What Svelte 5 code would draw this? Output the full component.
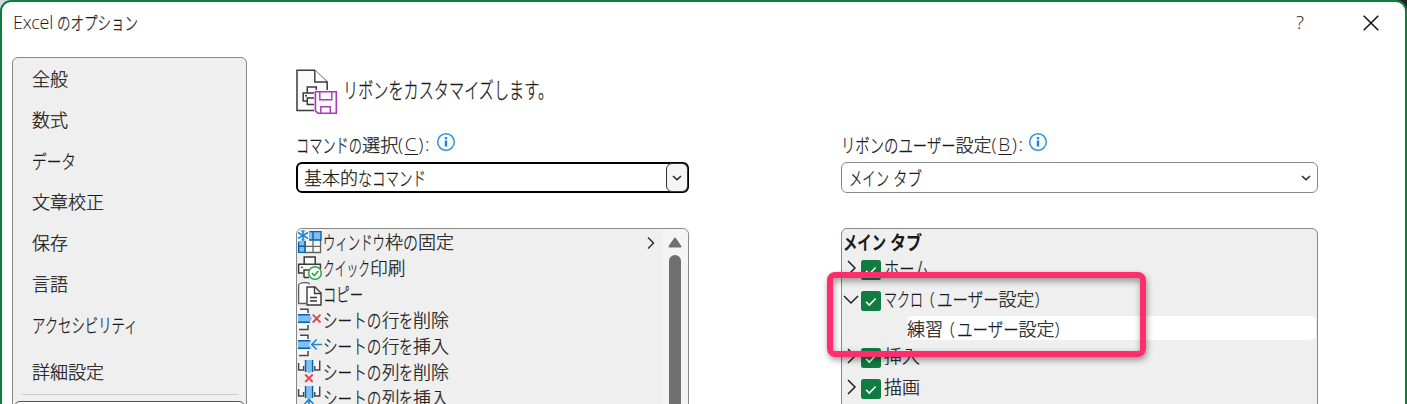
<script>
  // Each label is a list of runs: [text, advance width in px].
  const nav = [
    { runs: [['全般', 36]], h: 41 },
    { runs: [['数式', 36]], h: 41 },
    { runs: [['データ', 44]], h: 41 },
    { runs: [['文章校正', 72]], h: 41 },
    { runs: [['保存', 36]], h: 41 },
    { runs: [['言語', 36]], h: 41 },
    { runs: [['アクセシビリティ', 107]], h: 41 },
    { runs: [['詳細設定', 72]], h: 53 }
  ];
  const sheet = (axis, verb) => [['シートの', 58.5], [axis, 17.5], ['を', 14], [verb, 36]];
  const commands = [
    { icon: 'freeze', runs: [['ウィンドウ', 62], ['枠', 18], ['の', 15], ['固定', 36]], more: true },
    { icon: 'print', runs: [['クイック', 47], ['印刷', 35.5]] },
    { icon: 'copy', runs: [['コピー', 40]] },
    { icon: 'rowDelete', runs: sheet('行', '削除') },
    { icon: 'rowInsert', runs: sheet('行', '挿入') },
    { icon: 'colDelete', runs: sheet('列', '削除') },
    { icon: 'colInsert', runs: sheet('列', '挿入') }
  ];
  const custom = [[' ', 7], ['(', 6.5], ['ユーザー', 62], ['設定', 36], [')', 7]];
  const tabs = [
    { runs: [['ホーム', 46]], h: 31 },
    { runs: [['マクロ', 39], ...custom], h: 31, open: true },
    { runs: [['練習', 36], ...custom], h: 26, child: true },
    { runs: [['挿入', 36]], h: 31 },
    { runs: [['描画', 36]], h: 31 }
  ];
  const isCjk = (t) => t.charCodeAt(0) > 0x2fff;
  const isKana = (t) => isCjk(t) && t.charCodeAt(0) < 0x3100;
  // Kana are set narrower than kanji, and slightly taller.
  const fit = (text, w, size) =>
    isCjk(text) ? `scale(${w / (size * text.length)}, ${isKana(text) ? 1.08 : 1})` : 'none';
</script>

{#snippet label(runs, size = 18)}
  <span class="label" style="font-size:{size}px">
    {#each runs as [text, w]}
      <span class="run" class:latin={!isCjk(text)} style="width:{w}px"><span class="glyphs" style="transform:{fit(text, w, size)}">{text}</span></span>
    {/each}
  </span>
{/snippet}

{#snippet info()}
  <svg class="info" width="20" height="20" viewBox="0 0 20 20"><circle cx="10" cy="10" r="8.3" fill="#fafafa" stroke="#3195d8" stroke-width="1.5" /><path d="M10 8.5v6M10 5v2.2" stroke="#1683d8" stroke-width="2.3" /></svg>
{/snippet}

{#snippet commandIcon(name)}
  <svg class="cicon" width="26" height="26" viewBox="0 0 26 26" fill="none">
    {#if name === 'freeze'}
      <path d="M1 11h6V24H1zM12 2h12v9H12z" fill="#83beec" />
      <path d="M7 11h17v12.5H7z" fill="#fafafa" />
      <path d="M8 11.5V23M16 11.5V23M8 17.3h16M23.5 11v12.5H7.5" stroke="#66625f" stroke-width="1.3" />
      <path d="M1.6 13v10.4H8M1.6 17.3H8M8 23V11h16V2.6H12.5M16 2.6V11" stroke="#0063b1" stroke-width="1.4" />
      <path d="M0 0h12v12H0z" fill="#f4f4f4" />
      <path d="M6 1v11M1 3.5l10 6M11 3.5l-10 6" stroke="#1b87d3" stroke-width="1.5" />
      <path d="M4 1.5l2 2 2-2M4 11.5l2-2 2 2" stroke="#1b87d3" />
    {:else if name === 'print'}
      <path d="M7.2 9V2h11v7M6 18H1.6V9.2h21.8V14M7 22.5V15h8M7 22.5h5" fill="#fafafa" stroke="#3b3a39" stroke-width="1.5" />
      <path d="M4 12.4h2" stroke="#3b3a39" stroke-width="1.4" />
      <circle cx="18" cy="18" r="6.3" fill="#fafafa" stroke="#2fa045" stroke-width="1.5" />
      <path d="M14.8 18l2.5 2.5 4-4.5" stroke="#2fa045" stroke-width="1.6" />
    {:else if name === 'copy'}
      <path d="M9 22.5H1.6V4.5q0-1.5 1.5-2L6 1.6h4.5L13 3" fill="#fafafa" stroke="#605e5c" stroke-width="1.3" />
      <path d="M10 6h8l6 6v12H10z" fill="#fafafa" stroke="#3b3a39" stroke-width="1.4" />
      <path d="M17.5 6v6.5H24M13 16.5h7M13 20h7" stroke="#3b3a39" stroke-width="1.3" />
    {:else if name === 'rowDelete' || name === 'rowInsert'}
      <path d="M1 2h10v20H1z" fill="#fafafa" />
      <path d="M3 2.3h8V6M2 22.5h9V18" stroke="#4a4846" stroke-width="1.5" />
      <path d={name === 'rowDelete' ? 'M1 7.5h11.5l2.5 4-2.5 4H1z' : 'M1 7.5h14L12 11.5l3 4H1z'} fill="#83beec" />
      <path d="M1 7.7h12M1 15.3h12" stroke="#0063b1" stroke-width="1.4" />
      {#if name === 'rowDelete'}
        <path d="M15.7 7.7l7.8 7.8M23.5 7.7l-7.8 7.8" stroke="#ed4247" stroke-width="1.9" />
      {:else}
        <path d="M25 11.5H15.5M19.7 6.5l-5 5 5 5" stroke="#1c87cf" stroke-width="1.6" />
      {/if}
    {:else}
      <path d="M1 2h22v8H1z" fill="#fafafa" />
      <path d="M1.6 4V11h5V7M22.7 1.5V11h-5V7" stroke="#4a4846" stroke-width="1.5" />
      <path d="M8.5 1h7v11.5l-3.5 2-3.5-2z" fill="#83beec" />
      <path d="M8.5 1v12M15.6 1v12" stroke="#0063b1" stroke-width="1.4" />
      {#if name === 'colDelete'}
        <path d="M8.2 15.5l7.5 7.5M15.7 15.5l-7.5 7.5" stroke="#ed4247" stroke-width="1.9" />
      {:else}
        <path d="M12 25V14.5M7.5 19l4.5-4.5 4.5 4.5" stroke="#1c87cf" stroke-width="1.6" />
      {/if}
    {/if}
  </svg>
{/snippet}

<div class="screen">
  <div class="dialog">
    <header>
      <span class="title">{@render label([['Excel ', 43.5], ['のオプション', 81]], 17)}</span>
      <span class="help">?</span>
      <svg class="close" width="16" height="16" viewBox="0 0 16 16"><path d="M.7.7l14.6 14.6M15.3.7L.7 15.3" stroke="#111" stroke-width="1.5" /></svg>
    </header>
    <main>
      <nav>
        {#each nav as item}
          <div class="item" style="height:{item.h}px">{@render label(item.runs)}</div>
        {/each}
        <hr />
        <div class="current"></div>
      </nav>
      <section>
        <div class="heading">
          <svg width="42" height="46" viewBox="0 0 42 46" fill="none">
            <path d="M1 1.2h17.5L31.2 13v28.5H1z" fill="#fafafa" stroke="#3b3a39" stroke-width="1.5" />
            <path d="M18.8 1v12h12.4" fill="#fff" stroke="#3b3a39" stroke-width="1.4" />
            <path d="M11.3 24v-6h9v6M11 32H7.2V24h17M18 35.5h-6.7V29H18M9 26.7h2" stroke="#3b3a39" stroke-width="1.5" />
            <path d="M18 21h24v25H20l-2-3z" fill="#fafafa" />
            <path d="M19.4 22.7h20.9v21.6H22l-2.6-2.5z" stroke="#a83ab8" stroke-width="1.6" />
            <path d="M23.8 23v7.8h12V23M24.8 44v-6.3h9.5V44" stroke="#a83ab8" stroke-width="1.4" />
          </svg>
          {@render label([['リボンをカスタマイズします。', 212]], 20)}
        </div>
        <div class="columns">
          <div class="left">
            <div class="caption">{@render label([['コマンドの', 66], ['選択', 36.5]])}<span class="key">(<u>C</u>):</span>{@render info()}</div>
            <div class="select focus">{@render label([['基本的', 54], ['な', 14], ['コマンド', 54]])}
              <span class="drop"><svg width="10" height="6" viewBox="0 0 10 6"><path d="M1 1l4 3.7L9 1" fill="none" stroke="#222" stroke-width="1.5" /></svg></span>
            </div>
            <div class="list">
              <div class="rows">
                {#each commands as c}
                  <div class="command">
                    {@render commandIcon(c.icon)}
                    {@render label(c.runs)}
                    {#if c.more}<svg class="more" width="8" height="14" viewBox="0 0 8 14"><path d="M1 1.5L6.5 7 1 12.5" fill="none" stroke="#333" stroke-width="1.5" /></svg>{/if}
                  </div>
                {/each}
              </div>
              <div class="scroll">
                <svg width="14" height="11" viewBox="0 0 14 11"><path d="M7 1.5L12.5 9.5h-11z" fill="#707070" stroke="#707070" stroke-width="2" stroke-linejoin="round" /></svg>
                <div class="thumb"></div>
              </div>
            </div>
          </div>
          <div class="right">
            <div class="caption">{@render label([['リボンのユーザー', 115], ['設定', 36]])}<span class="key">(<u>B</u>):</span>{@render info()}</div>
            <div class="select">{@render label([['メイン', 40], [' ', 4], ['タブ', 29]])}
              <svg width="10" height="6" viewBox="0 0 10 6"><path d="M1 1l4 3.7L9 1" fill="none" stroke="#222" stroke-width="1.5" /></svg>
            </div>
            <div class="list tree">
              <div class="root">{@render label([['メイン', 43], [' ', 4], ['タブ', 32]])}</div>
              {#each tabs as t}
                <div class="node" class:child={t.child} style="height:{t.h}px">
                  {#if !t.child}
                    <svg class="twist" width="16" height="16" viewBox="0 0 16 16"><path d={t.open ? 'M1 5l7 7 7-7' : 'M5 1l7 7-7 7'} fill="none" stroke="#222" stroke-width="1.5" /></svg>
                    <svg class="box" width="20" height="20" viewBox="0 0 20 20"><rect width="20" height="20" rx="2.5" fill="#107c41" /><path d="M5 10.8l3.3 3.3 6.3-6.6" fill="none" stroke="#fff" stroke-width="1.6" /></svg>
                  {/if}
                  <span class="name">{@render label(t.runs)}</span>
                </div>
              {/each}
            </div>
          </div>
        </div>
      </section>
    </main>
  </div>
  <div class="highlight"></div>
</div>

<style>
  :global(body) { margin: 0; overflow: hidden; }
  * { box-sizing: border-box; }
  .screen { position: relative; width: 1407px; height: 404px; overflow: hidden; background: linear-gradient(90deg, #d8d8d8 50%, #222 50%); font-family: "Noto Sans", "Noto Sans CJK JP", sans-serif; color: #1a1a1a; font-size: 18px; }
  .dialog { height: 430px; background: #fff; border: 2px solid #107c41; border-radius: 11px; }
  .label { display: inline-flex; line-height: 24px; height: 26px; font-family: "Noto Sans CJK JP", sans-serif; font-weight: 300; -webkit-text-stroke: 0.25px currentColor; white-space: pre; flex: none; }
  .run { display: block; flex: none; white-space: pre; }
  .latin { font-family: "Open Sans", sans-serif; -webkit-text-stroke: 0; }
  .glyphs { display: inline-block; transform-origin: 0 50%; white-space: pre; }
  header { display: flex; align-items: center; height: 42px; padding: 0 25px 0 11px; }
  .title { flex: 1; display: flex; }
  .title .latin { font-size: 18px; letter-spacing: -0.3px; }
  .help { width: 10px; margin: -3px 57px 0 0; font: 300 19px "Open Sans", sans-serif; }
  .close { margin-right: 1px; }
  main { display: flex; gap: 49px; padding: 13px 0 0 10px; }
  nav { width: 235px; height: 380px; border: 1px solid #888; border-radius: 6px; background: #efefef; padding: 1px 1px 0; }
  .item { display: flex; align-items: center; padding-left: 18px; }
  .item .label { margin-top: -2px; }
  nav hr { border: 0; border-top: 1px solid #cbcbcb; margin: -5px 7px 0 8px; }
  .current { height: 40px; margin-top: 6px; border: 1px solid #555; border-radius: 6px; background: #fff; }
  .heading { display: flex; gap: 5px; height: 68px; padding-top: 12px; }
  .heading .label { margin-top: 8px; }
  .columns { display: flex; gap: 152px; }
  .left { width: 393px; }
  .right { width: 477px; }
  .caption { display: flex; height: 37px; padding-top: 7px; }
  .caption .label { margin-left: -0.5px; }
  .key { font: 300 19px/25px "Open Sans", sans-serif; letter-spacing: 1.6px; margin-right: 2px; width: 36px; }
  .right .key { width: 34.5px; }
  u { text-decoration-thickness: 1px; text-underline-offset: 3px; }
  .info { margin-top: 0; flex: none; }
  .select { display: flex; align-items: center; justify-content: space-between; height: 31px; border: 1px solid #888; border-radius: 6px; padding: 0 6px 0 7px; background: #fff; }
  .focus { border: 2px solid #000; padding: 0 0 0 6px; }
  .drop { display: flex; align-items: center; justify-content: center; width: 22px; height: 29px; margin-right: -1px; border: 1px solid #333; border-radius: 6px; background: #f5f5f5; }
  .list { display: flex; height: 220px; margin-top: 35px; border: 1px solid #888; border-radius: 6px; background: #efefef; overflow: hidden; }
  .rows { flex: 1; }
  .command { display: flex; align-items: center; height: 26px; }
  .more { margin: 2px 7px 0 auto; }
  .scroll { width: 26px; background: #f4f4f4; border-radius: 6px; display: flex; flex-direction: column; align-items: center; padding-top: 8px; gap: 7px; }
  .thumb { width: 12px; height: 190px; border-radius: 6px; background: #707070; }
  .tree { display: block; padding-left: 0; }
  .root { height: 23px; padding-left: 1px; }
  .root .label { font-weight: 700; -webkit-text-stroke: 0; }
  .node { display: flex; align-items: center; }
  .twist { margin: 0 2px 0 1px; }
  .box { margin: 4px 3px 0 0; }
  .name { display: flex; }
  .child .name { margin: 2px 1px 0 65px; flex: 1; height: 24px; align-items: center; background: #fff; border-radius: 5px; }
  .child .label { margin-top: 2px; }
  .highlight { position: absolute; left: 827px; top: 272px; width: 319px; height: 85px; border: 6px solid #ff2d6d; border-radius: 8px; box-shadow: 1px 3px 6px #0006, inset 1px 3px 7px #0006; }
</style>
